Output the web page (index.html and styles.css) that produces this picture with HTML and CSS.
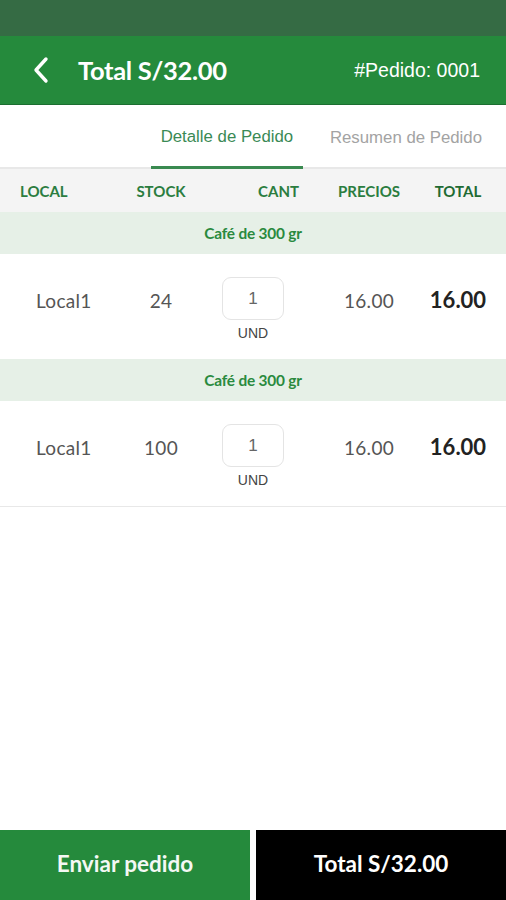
FILE: index.html
```html
<!DOCTYPE html>
<html lang="es">
<head>
  <meta charset="UTF-8">
  <title>Detalle de Pedido</title>
  <link rel="stylesheet" href="styles.css">
</head>
<body>

  <div class="app">
    <!-- barra de estado -->
    <div class="statusbar"></div>

    <!-- cabecera -->
    <header class="cabecera">
      <svg class="atras" width="20" height="28" viewBox="0 0 20 28">
        <polyline points="15,3 5,14 15,25" fill="none" stroke="#fff" stroke-width="3.4" stroke-linecap="round" stroke-linejoin="round"/>
      </svg>
      <h1 class="titulo">Total S/32.00</h1>
      <span class="pedido">#Pedido: 0001</span>
    </header>

    <!-- pestañas -->
    <nav class="tabs">
      <span class="tab activa">Detalle de Pedido</span>
      <span class="tab">Resumen de Pedido</span>
    </nav>

    <!-- columnas -->
    <div class="fila cols">
      <span class="c-local">LOCAL</span>
      <span class="c-stock">STOCK</span>
      <span class="c-cant">CANT</span>
      <span class="c-precio">PRECIOS</span>
      <span class="c-total">TOTAL</span>
    </div>

    <div class="grupo">Café de 300 gr</div>
    <div class="fila item">
      <span class="c-local">Local1</span>
      <span class="c-stock">24</span>
      <div class="c-cant">
        <div class="cantidad">1</div>
        <span class="und">UND</span>
      </div>
      <span class="c-precio">16.00</span>
      <span class="c-total">16.00</span>
    </div>

    <div class="grupo">Café de 300 gr</div>
    <div class="fila item ultimo">
      <span class="c-local">Local1</span>
      <span class="c-stock">100</span>
      <div class="c-cant">
        <div class="cantidad">1</div>
        <span class="und">UND</span>
      </div>
      <span class="c-precio">16.00</span>
      <span class="c-total">16.00</span>
    </div>

    <div class="relleno"></div>

    <!-- pie -->
    <footer class="pie">
      <button class="btn enviar">Enviar pedido</button>
      <button class="btn total">Total S/32.00</button>
    </footer>
  </div>

</body>
</html>
```

FILE: styles.css
```css
body { margin:0; font-family: Lato, "Liberation Sans", sans-serif; background:#fff; }
.app { width:506px; height:900px; display:flex; flex-direction:column; }

.statusbar { height:36px; background:#356b44; }

.cabecera { height:68px; background:#258a3c; border-bottom:1px solid #1c6e30; display:flex; align-items:center; color:#fff; padding:0 26px 0 31px; }
.atras { margin-right:27px; }
.titulo { margin:0; font-size:25.5px; font-weight:700; letter-spacing:-0.3px; flex:1; }
.pedido { font-family:"Liberation Sans", Arial, sans-serif; font-size:19.5px; letter-spacing:0; }

.tabs { height:62px; display:flex; justify-content:flex-end; border-bottom:2px solid #e8e8e8; font-family:"Liberation Sans", Arial, sans-serif; font-size:16.8px; }
.tab { display:flex; align-items:center; padding:2px 0 0; color:#a3a3a3; margin-bottom:-2px; }
.tab.activa { color:#3a8a55; width:152px; justify-content:center; border-bottom:3px solid #3a8a50; margin-right:27px; }
.tab:last-child { padding-right:24px; }

.fila { display:grid; grid-template-columns:112px 98px 118px 82px 96px; align-items:center; }
.cols { height:43px; background:#f4f4f4; font-size:15px; font-weight:700; color:#2b7d40; }
.cols .c-local { padding-left:20px; }
.cols .c-stock, .cols .c-precio, .cols .c-total { text-align:center; }
.cols .c-cant { text-align:right; padding-right:29px; }
.cols .c-total { color:#1f6b33; }

.grupo { height:42px; background:#e6f0e7; color:#2a8a3e; font-size:15.4px; font-weight:700; display:flex; align-items:center; justify-content:center; letter-spacing:-0.2px; }

.item { height:105px; align-items:start; padding-top:32px; box-sizing:border-box; font-size:19px; letter-spacing:0.3px; color:#555; }
.item.ultimo { height:106px; border-bottom:1px solid #e8e8e8; }
.item .c-local { padding-left:36px; padding-top:3px; }
.item .c-stock, .item .c-precio { text-align:center; padding-top:3px; }
.item .c-total { text-align:center; font-size:22px; font-weight:700; color:#222; letter-spacing:0; }
.item .c-cant { margin-top:-9px; width:62px; margin-left:12px; display:flex; flex-direction:column; align-items:center; letter-spacing:0; }
.cantidad { width:62px; height:43px; box-sizing:border-box; border:1px solid #e4e4e4; border-radius:9px; display:flex; align-items:center; justify-content:center; font-family:"Liberation Sans", Arial, sans-serif; font-size:17px; color:#666; }
.und { font-family:"Liberation Sans", Arial, sans-serif; font-size:14px; color:#444; margin-top:5px; }

.relleno { flex:1; }

.pie { height:70px; display:flex; gap:6px; }
.btn { border:0; margin:0; padding:0 0 3px; font-family:Lato, sans-serif; font-size:22.5px; font-weight:700; color:#f4f8f4; }
.enviar { width:250px; background:#258a3c; }
.total { flex:1; background:#000; color:#fff; }
```
